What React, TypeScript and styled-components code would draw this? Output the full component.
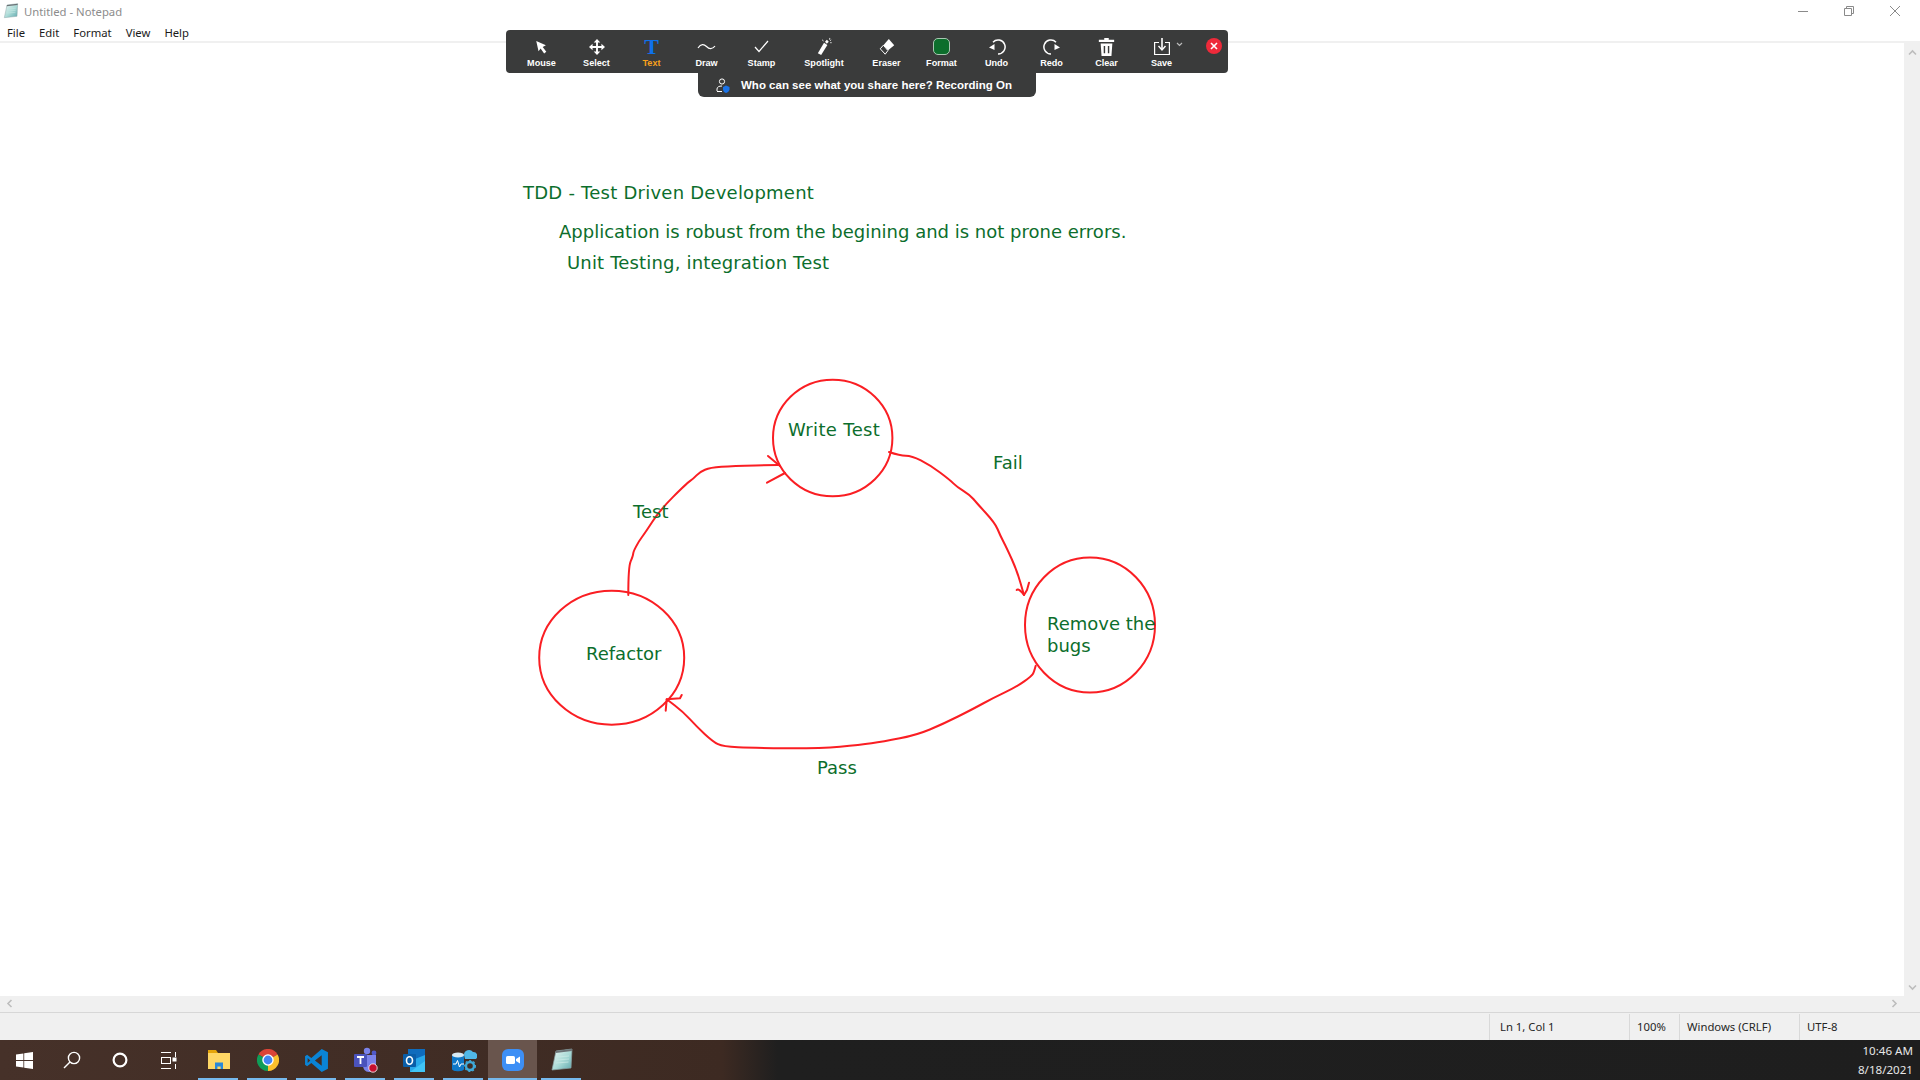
import styled, { createGlobalStyle } from "styled-components";

const GlobalStyle = createGlobalStyle`
  html, body {
    margin: 0;
    padding: 0;
    background: #fff;
    overflow: hidden;
  }
`;

const Screen = styled.div`
  position: relative;
  width: 1920px;
  height: 1080px;
  display: flex;
  flex-direction: column;
  overflow: hidden;
  font-family: "Noto Sans", "Open Sans", sans-serif;
  font-size: 11.3px;
  color: #1a1a1a;
`;

const TitleBar = styled.div`
  height: 22px;
  display: flex;
  align-items: center;
  padding-left: 3px;
  color: #8c8c8c;
`;

const TitleText = styled.span`
  margin-left: 5px;
  flex: 1;
`;

const WindowButton = styled.div`
  width: 46px;
  height: 22px;
  display: flex;
  align-items: center;
  justify-content: center;
  &:last-child {
    margin-right: 2px;
  }
`;

const MenuBar = styled.div`
  height: 19px;
  padding-top: 2px;
  box-sizing: border-box;
  display: flex;
  align-items: center;
`;

const MenuItem = styled.span`
  padding: 0 7px;
`;

const EditRow = styled.div`
  flex: 1;
  display: flex;
  border-top: 2px solid #f0f0f0;
`;

const EditArea = styled.div`
  flex: 1;
  background: #fff;
`;

const VerticalBar = styled.div`
  width: 16px;
  background: #f0f0f0;
  display: flex;
  flex-direction: column;
  justify-content: space-between;
  align-items: center;
  padding: 5px 0 4px;
`;

const HorizontalBar = styled.div`
  height: 16px;
  background: #f0f0f0;
  display: flex;
  justify-content: space-between;
  align-items: center;
  padding: 0 21px 1px 5px;
  box-sizing: border-box;
`;

const StatusBar = styled.div`
  height: 27px;
  background: #f0f0f0;
  border-top: 1px solid #d7d7d7;
  display: flex;
  justify-content: flex-end;
`;

const StatusCell = styled.div<{ $width: number; $inset?: number }>`
  width: ${(p) => p.$width}px;
  box-sizing: border-box;
  margin-top: 1px;
  padding: 0 0 2px ${(p) => p.$inset ?? 7}px;
  border-left: 1px solid #d9d9d9;
  display: flex;
  align-items: center;
  color: #262626;
`;

const Taskbar = styled.div`
  height: 40px;
  display: flex;
  background: linear-gradient(90deg, #463129 0%, #3d2a22 37.6%, #1f1f1f 40.5%, #1e1e1e 100%);
`;

const TaskButton = styled.div`
  width: 48px;
  display: flex;
  align-items: center;
  justify-content: center;
`;

const PinnedApps = styled.div`
  display: flex;
  margin-left: 2px;
`;

const PinnedApp = styled.div<{ $active?: boolean }>`
  position: relative;
  width: 49px;
  display: flex;
  align-items: center;
  justify-content: center;
  background: ${(p) => (p.$active ? "#69554d" : "transparent")};

  &::after {
    content: "";
    position: absolute;
    bottom: 0;
    left: ${(p) => (p.$active ? 0 : 4)}px;
    right: ${(p) => (p.$active ? 0 : 5)}px;
    height: 2px;
    background: #76b9ed;
  }
`;

const Clock = styled.div`
  margin-left: auto;
  padding-right: 7px;
  display: flex;
  flex-direction: column;
  justify-content: center;
  align-items: flex-end;
  gap: 3px;
  color: #e6e6e6;
  font-size: 11.6px;
  line-height: 16px;
`;

const Whiteboard = styled.div`
  position: absolute;
  inset: 0;
  pointer-events: none;
`;

const Sketch = styled.svg`
  position: absolute;
  left: 0;
  top: 0;
`;

const Note = styled.div<{ $x: number; $y: number; $track?: number }>`
  position: absolute;
  left: ${(p) => p.$x}px;
  top: ${(p) => p.$y}px;
  font-family: "DejaVu Sans", sans-serif;
  font-size: 18px;
  line-height: 22px;
  letter-spacing: ${(p) => p.$track ?? 0}px;
  color: #0c6e2c;
  white-space: nowrap;
`;

const ToolbarDock = styled.div`
  position: absolute;
  left: 506px;
  top: 30px;
  width: 722px;
  display: flex;
  flex-direction: column;
  align-items: center;
  font-family: "Liberation Sans", Arial, sans-serif;
`;

const Toolbar = styled.div`
  width: 100%;
  height: 43px;
  box-sizing: border-box;
  padding-left: 8px;
  background: #3a3b3b;
  border-radius: 4px;
  display: flex;
  align-items: stretch;
`;

const Tool = styled.div<{ $wide?: boolean; $color?: string }>`
  width: ${(p) => (p.$wide ? 70 : 55)}px;
  display: flex;
  flex-direction: column;
  align-items: center;
  justify-content: flex-end;
  padding-bottom: 4px;
  box-sizing: border-box;
  color: ${(p) => p.$color ?? "#fff"};
  font-size: 9.1px;
  font-weight: 700;
  line-height: 11px;
`;

const ToolIcon = styled.div`
  height: 21px;
  display: flex;
  align-items: center;
  justify-content: center;
  margin-bottom: 1px;
`;

const TextGlyph = styled.span`
  font-family: "Liberation Serif", serif;
  font-weight: 700;
  font-size: 22px;
  line-height: 21px;
  color: #0e71eb;
`;

const FormatSwatch = styled.div`
  width: 17px;
  height: 17px;
  box-sizing: border-box;
  background: #0c6e2c;
  border: 1.5px solid #a9c7b2;
  border-radius: 5px;
`;

const SaveGlyph = styled.svg`
  margin-left: 16px;
`;

const CloseDot = styled.div`
  width: 16px;
  height: 16px;
  margin: 8px 0 0 17px;
  border-radius: 50%;
  background: #ee2a3a;
  display: flex;
  align-items: center;
  justify-content: center;
`;

const ShareNotice = styled.div`
  width: 338px;
  height: 24px;
  background: #3a3b3b;
  border-radius: 0 0 6px 6px;
  display: flex;
  align-items: center;
  gap: 11px;
  padding-left: 18px;
  box-sizing: border-box;
  color: #fff;
  font-size: 11.5px;
  font-weight: 700;
`;

const RED = "#fa1e23";

// rounds a hand-drawn polyline through the midpoints of its segments
function smooth(points: number[][]) {
  let d = `M${points[0][0]} ${points[0][1]}`;
  for (let i = 1; i < points.length - 1; i++) {
    const mx = (points[i][0] + points[i + 1][0]) / 2;
    const my = (points[i][1] + points[i + 1][1]) / 2;
    d += ` Q${points[i][0]} ${points[i][1]} ${mx} ${my}`;
  }
  const last = points[points.length - 1];
  return `${d} L${last[0]} ${last[1]}`;
}

const testStroke = [[628.3, 595], [628.3, 566.7], [633, 556], [633.3, 551.7], [639, 541], [645, 533], [660, 510], [686.7, 483.3], [693, 479], [700, 471.7], [710, 467.7], [733, 466], [778, 465]];
const failStroke = [[889, 452], [900, 455.7], [911.7, 455.7], [930, 465], [950, 480], [956.7, 486.7], [970, 495], [976.7, 503], [995, 523], [1000, 535], [1006.7, 548], [1016.7, 570], [1024, 595]];
const passStroke = [[1035.7, 665.7], [1034, 672], [1031.7, 676], [1016.7, 686.7], [993, 698], [973, 709], [943, 724], [916.7, 735], [883, 741.7], [860, 745], [820, 748.3], [753, 748], [723, 746.7], [713, 741.7], [696.7, 726.7], [683, 711.7], [666.7, 699.3]];

function Chevron({ dir }: { dir: "up" | "down" | "left" | "right" }) {
  const rotate = { up: 0, right: 90, down: 180, left: 270 }[dir];
  return (
    <svg width="9" height="9" viewBox="0 0 9 9" style={{ transform: `rotate(${rotate}deg)` }}>
      <path d="M1 6.5 L4.5 3 L8 6.5" fill="none" stroke="#bdbdbd" strokeWidth="1.6" />
    </svg>
  );
}

function NotepadIcon({ size }: { size: number }) {
  return (
    <svg width={size} height={size} viewBox="0 0 24 24">
      <defs>
        <linearGradient id="pad" x1="0" y1="0" x2="1" y2="1">
          <stop offset="0" stopColor="#eef7f5" />
          <stop offset="0.55" stopColor="#a9dad6" />
          <stop offset="1" stopColor="#5fa8ae" />
        </linearGradient>
      </defs>
      <path d="M6 3 L22 1 L21 20 L2 22 Z" fill="url(#pad)" stroke="#8aa5a6" strokeWidth="0.7" />
      <path d="M6 3 L22 1 L21.9 3 L5.7 4.9 Z" fill="#6b7276" />
      <path d="M7 9 L19 8 M6.5 12 L19 11 M6 15 L18.5 14" stroke="#c9e8e5" strokeWidth="0.8" />
    </svg>
  );
}

function RecordingStrokes() {
  return (
    <Sketch width="1920" height="1080" viewBox="0 0 1920 1080" fill="none" stroke={RED} strokeWidth="2" strokeLinecap="round" strokeLinejoin="round">
      <ellipse cx="832.7" cy="438" rx="59.7" ry="58.3" />
      <ellipse cx="611.7" cy="657.7" rx="72.5" ry="67" />
      <ellipse cx="1090" cy="625" rx="65" ry="67.5" />
      <path d={smooth(testStroke)} />
      <path d="M768 456 L780 466 M767 482.7 L785 473" />
      <path d={smooth(failStroke)} />
      <path d="M1016.7 590 C1018 588 1022 592 1024 595 L1027 590 L1029 582.7" />
      <path d={smooth(passStroke)} />
      <path d="M681.7 695 L680 698.3 L666.7 699.3 L665.7 710.7" />
    </Sketch>
  );
}

function ChromeIcon() {
  return (
    <svg width="22" height="22" viewBox="2 2 20 20">
      <path d="M12 12 L3.3 7 A10 10 0 0 1 20.7 7 Z" fill="#db4437" />
      <path d="M12 12 L20.7 7 A10 10 0 0 1 12 22 Z" fill="#fbc02d" />
      <path d="M12 12 L12 22 A10 10 0 0 1 3.3 7 Z" fill="#0f9d58" />
      <circle cx="12" cy="12" r="5.2" fill="#fff" />
      <circle cx="12" cy="12" r="4" fill="#4285f4" />
    </svg>
  );
}

function ExplorerIcon() {
  return (
    <svg width="22" height="20" viewBox="0 0 22 20">
      <path d="M0 0 H8 L10 3 H0 Z" fill="#e5a50a" />
      <rect x="0" y="3" width="22" height="16" fill="#ffd765" />
      <path d="M7 19 V14 H15 V19 H12.6 V16.5 H9.4 V19 Z" fill="#2b88d8" />
      <rect x="7" y="12.5" width="8" height="2.5" fill="#2b88d8" />
    </svg>
  );
}

function VsCodeIcon() {
  return (
    <svg width="25" height="25" viewBox="0 0 24 24">
      <path d="M17 1 L23 4 V20 L17 23 L7 14.5 L3 17.5 L1 16 V8 L3 6.5 L7 9.5 Z M17 7 L10.5 12 L17 17 Z M3.5 9.5 V14.5 L6 12 Z" fill="#0a84d6" fillRule="evenodd" />
    </svg>
  );
}

function TeamsIcon() {
  return (
    <svg width="26" height="26" viewBox="0 0 26 26">
      <circle cx="14" cy="4" r="3.2" fill="#7b83eb" />
      <circle cx="21" cy="6" r="2.4" fill="#5059c9" />
      <path d="M10 8 H23 V18 C23 22 20 25 16 25 C12 25 10 22 10 18 Z" fill="#7b83eb" />
      <rect x="1" y="7" width="13" height="13" rx="1" fill="#4b53bc" />
      <path d="M4 10 H11 M7.5 10 V17" stroke="#fff" strokeWidth="1.8" />
      <circle cx="20" cy="21" r="4.2" fill="#c50f2f" stroke="#fff" strokeWidth="0.8" />
    </svg>
  );
}

function OutlookIcon() {
  return (
    <svg width="25" height="25" viewBox="0 0 25 25">
      <rect x="6" y="1" width="17" height="12" fill="#0f6cbd" />
      <path d="M23 7 V24 H8 V13 Z" fill="#28a8ea" />
      <path d="M8 24 L23 13 V24 Z" fill="#50d9ff" opacity="0.6" />
      <rect x="1" y="6" width="13" height="13" rx="1" fill="#0a5ea8" />
      <ellipse cx="7.5" cy="12.5" rx="3" ry="3.8" fill="none" stroke="#fff" strokeWidth="1.6" />
    </svg>
  );
}

function DataStudioIcon() {
  return (
    <svg width="26" height="28" viewBox="0 0 26 28">
      <path d="M13 9 A5 5 0 0 1 22 6 A4 4 0 0 1 25 13 H14 Z" fill="#50b8e8" />
      <path d="M1 9 V23 C1 26 13 26 13 23 V9 Z" fill="#0f78c8" />
      <ellipse cx="7" cy="9" rx="6" ry="2.4" fill="#d8eaf4" />
      <path d="M2 18 H5 L6.5 14.5 L8.5 21 L10 18 H13" fill="none" stroke="#fff" strokeWidth="1" />
      <circle cx="19" cy="20" r="4" fill="none" stroke="#3fa9d8" strokeWidth="2.4" />
      <circle cx="19" cy="20" r="5.4" fill="none" stroke="#3fa9d8" strokeWidth="1.2" strokeDasharray="2 2" />
    </svg>
  );
}

function ZoomIcon() {
  return (
    <svg width="22" height="22" viewBox="0 0 22 22">
      <rect x="0" y="0" width="22" height="22" rx="6" fill="#3d8ff5" />
      <rect x="4" y="7" width="9" height="8" rx="1.6" fill="#fff" />
      <path d="M14 10 L18 7.5 V14.5 L14 12 Z" fill="#fff" />
    </svg>
  );
}

export default function App() {
  return (
    <Screen>
      <GlobalStyle />
      <TitleBar>
        <NotepadIcon size={16} />
        <TitleText>Untitled - Notepad</TitleText>
        <WindowButton>
          <svg width="10" height="10"><path d="M0 5.5 H10" stroke="#8a8a8a" /></svg>
        </WindowButton>
        <WindowButton>
          <svg width="10" height="10" fill="none" stroke="#8a8a8a"><path d="M0.5 2.5 H7.5 V9.5 H0.5 Z M2.5 2.5 V0.5 H9.5 V7.5 H7.5" /></svg>
        </WindowButton>
        <WindowButton>
          <svg width="10" height="10"><path d="M0 0 L10 10 M10 0 L0 10" stroke="#8a8a8a" /></svg>
        </WindowButton>
      </TitleBar>
      <MenuBar>
        <MenuItem>File</MenuItem>
        <MenuItem>Edit</MenuItem>
        <MenuItem>Format</MenuItem>
        <MenuItem>View</MenuItem>
        <MenuItem>Help</MenuItem>
      </MenuBar>
      <EditRow>
        <EditArea />
        <VerticalBar>
          <Chevron dir="up" />
          <Chevron dir="down" />
        </VerticalBar>
      </EditRow>
      <HorizontalBar>
        <Chevron dir="left" />
        <Chevron dir="right" />
      </HorizontalBar>
      <StatusBar>
        <StatusCell $width={140} $inset={10}>Ln 1, Col 1</StatusCell>
        <StatusCell $width={50}>100%</StatusCell>
        <StatusCell $width={120}>Windows (CRLF)</StatusCell>
        <StatusCell $width={121}>UTF-8</StatusCell>
      </StatusBar>
      <Taskbar>
        <TaskButton>
          <svg width="17" height="17" viewBox="0 0 17 17" fill="#fff">
            <path d="M0 2.4 L7.4 1.4 V8 H0 Z M8.2 1.3 L17 0 V8 H8.2 Z M0 9 H7.4 V15.6 L0 14.6 Z M8.2 9 H17 V17 L8.2 15.7 Z" />
          </svg>
        </TaskButton>
        <TaskButton>
          <svg width="18" height="18" viewBox="0 0 18 18" fill="none" stroke="#fff" strokeWidth="1.4">
            <circle cx="11" cy="7" r="5.6" />
            <path d="M7 11 L1 17" />
          </svg>
        </TaskButton>
        <TaskButton>
          <svg width="16" height="16" viewBox="0 0 16 16" fill="none" stroke="#fff" strokeWidth="2.2">
            <circle cx="8" cy="8" r="6.4" />
          </svg>
        </TaskButton>
        <TaskButton>
          <svg width="17" height="17" viewBox="0 0 17 17" fill="none" stroke="#fff" strokeWidth="1">
            <path d="M1 .5 H11 M1 16.5 H11 M15.5 0 V5 M15.5 12 V17" />
            <rect x="1.5" y="5.5" width="9" height="6" />
            <rect x="13" y="6" width="3" height="3" fill="#fff" />
          </svg>
        </TaskButton>
        <PinnedApps>
          <PinnedApp><ExplorerIcon /></PinnedApp>
          <PinnedApp><ChromeIcon /></PinnedApp>
          <PinnedApp><VsCodeIcon /></PinnedApp>
          <PinnedApp><TeamsIcon /></PinnedApp>
          <PinnedApp><OutlookIcon /></PinnedApp>
          <PinnedApp><DataStudioIcon /></PinnedApp>
          <PinnedApp $active><ZoomIcon /></PinnedApp>
          <PinnedApp><NotepadIcon size={24} /></PinnedApp>
        </PinnedApps>
        <Clock>
          <span>10:46 AM</span>
          <span>8/18/2021</span>
        </Clock>
      </Taskbar>

      <Whiteboard>
        <RecordingStrokes />
        <Note $x={523} $y={182} $track={0.24}>TDD - Test Driven Development</Note>
        <Note $x={559} $y={221}>Application is robust from the begining and is not prone errors.</Note>
        <Note $x={567} $y={252} $track={0.17}>Unit Testing, integration Test</Note>
        <Note $x={788} $y={419} $track={0.35}>Write Test</Note>
        <Note $x={993} $y={452}>Fail</Note>
        <Note $x={633} $y={501}>Test</Note>
        <Note $x={586} $y={643}>Refactor</Note>
        <Note $x={1047} $y={613}>Remove the<br />bugs</Note>
        <Note $x={817} $y={757}>Pass</Note>
      </Whiteboard>

      <ToolbarDock>
        <Toolbar>
          <Tool>
            <ToolIcon>
              <svg width="13" height="14" viewBox="0 0 14 16" fill="#fff"><path d="M1 1 L12 6 L8.4 8 L12.5 13.5 L10 15.5 L6 9.8 L3.6 12.8 Z" /></svg>
            </ToolIcon>
            Mouse
          </Tool>
          <Tool>
            <ToolIcon>
              <svg width="16" height="16" viewBox="0 0 17 17" fill="#fff">
                <path d="M8.5 0 L12 3.8 H5 Z M8.5 17 L12 13.2 H5 Z M0 8.5 L3.8 5 V12 Z M17 8.5 L13.2 5 V12 Z" />
                <path d="M8.5 3 V14 M3 8.5 H14" stroke="#fff" strokeWidth="2" />
              </svg>
            </ToolIcon>
            Select
          </Tool>
          <Tool $color="#f7a01b">
            <ToolIcon><TextGlyph>T</TextGlyph></ToolIcon>
            Text
          </Tool>
          <Tool>
            <ToolIcon>
              <svg width="19" height="10" viewBox="0 0 19 10" fill="none" stroke="#fff" strokeWidth="1.2"><path d="M1 6 C4 1.5 7 2 9.5 4.5 C12 7 15 8 18 4" /></svg>
            </ToolIcon>
            Draw
          </Tool>
          <Tool>
            <ToolIcon>
              <svg width="15" height="13" viewBox="0 0 15 13" fill="none" stroke="#fff" strokeWidth="1.2"><path d="M1 7 L5 11.5 L14 1" /></svg>
            </ToolIcon>
            Stamp
          </Tool>
          <Tool $wide>
            <ToolIcon>
              <svg width="17" height="19" viewBox="0 0 17 20">
                <path d="M8 6 L11.5 8.5 L5 19 L1.5 17 Z" fill="#fff" />
                <path d="M11 3 L13 5 L11 7 L9 5 Z" fill="#fff" />
                <path d="M14 1 V3 M16 6 H14.5 M15.5 3 L14.5 4 M6 3 L7.5 4.2" stroke="#fff" strokeWidth="0.9" />
              </svg>
            </ToolIcon>
            Spotlight
          </Tool>
          <Tool>
            <ToolIcon>
              <svg width="18" height="18" viewBox="0 0 18 20">
                <path d="M11 1 L17 8 L10 14 L5 8 Z" fill="#fff" />
                <path d="M5 8 L10 14 L7 18 L1.5 12 Z" fill="#3a3b3b" stroke="#fff" strokeWidth="1.1" />
              </svg>
            </ToolIcon>
            Eraser
          </Tool>
          <Tool>
            <ToolIcon><FormatSwatch /></ToolIcon>
            Format
          </Tool>
          <Tool>
            <ToolIcon>
              <svg width="18" height="18" viewBox="0 0 18 18" fill="none" stroke="#fff" strokeWidth="1.5">
                <path d="M10 16 A7 7 0 1 0 5 4.2" />
                <path d="M1 9.5 L6.5 6 L6.5 12 Z" fill="#fff" stroke="none" />
              </svg>
            </ToolIcon>
            Undo
          </Tool>
          <Tool>
            <ToolIcon>
              <svg width="18" height="18" viewBox="0 0 18 18" fill="none" stroke="#fff" strokeWidth="1.5">
                <path d="M8 16 A7 7 0 1 1 13 4.2" />
                <path d="M17 9.5 L11.5 6 L11.5 12 Z" fill="#fff" stroke="none" />
              </svg>
            </ToolIcon>
            Redo
          </Tool>
          <Tool>
            <ToolIcon>
              <svg width="17" height="18" viewBox="0 0 17 20" fill="#fff">
                <path d="M6 0 H11 V2 H17 V4.5 H0 V2 H6 Z" />
                <path d="M2 6 H15 L14 20 H3 Z M5.4 9 V17 H7 V9 Z M10 9 V17 H11.6 V9 Z" fillRule="evenodd" />
              </svg>
            </ToolIcon>
            Clear
          </Tool>
          <Tool>
            <ToolIcon>
              <SaveGlyph width="32" height="18" viewBox="0 0 32 18" fill="none" stroke="#fff" strokeWidth="1.2">
                <path d="M5 4.5 H.6 V16.5 H15.4 V4.5 H11" />
                <path d="M8 0 V11" strokeWidth="1.6" />
                <path d="M4.5 8 L8 12 L11.5 8" strokeWidth="1.4" />
                <path d="M23 5 L25.5 7.5 L28 5" stroke="#bbb" />
              </SaveGlyph>
            </ToolIcon>
            Save
          </Tool>
          <CloseDot>
            <svg width="8" height="8" viewBox="0 0 8 8"><path d="M1 1 L7 7 M7 1 L1 7" stroke="#fff" strokeWidth="1.6" /></svg>
          </CloseDot>
        </Toolbar>
        <ShareNotice>
          <svg width="14" height="15" viewBox="0 0 14 15" fill="none" stroke="#fff" strokeWidth="1">
            <circle cx="6" cy="3.5" r="2.6" />
            <path d="M1 13 V11 C1 9 3 8 6 8" />
            <path d="M1 13.5 H6" />
            <path d="M10 7.5 L13.5 9 V11.5 C13.5 13 11.5 14.5 10 15 C8.5 14.5 7 13 7 11.5 V9 Z" fill="#1a73e8" stroke="none" />
          </svg>
          Who can see what you share here? Recording On
        </ShareNotice>
      </ToolbarDock>
    </Screen>
  );
}
